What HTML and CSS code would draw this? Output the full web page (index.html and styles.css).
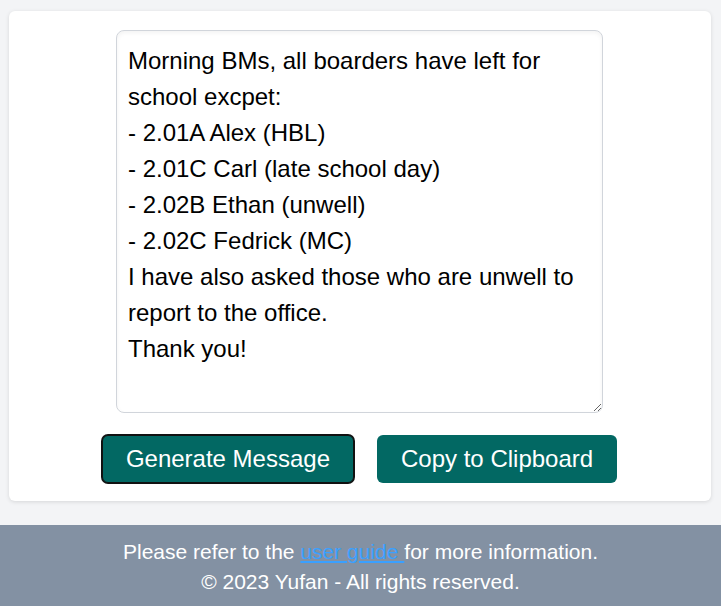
FILE: index.html
```html
<!DOCTYPE html>
<html lang="en">
<head>
<meta charset="utf-8">
<title>Boarders Message</title>
<link rel="stylesheet" href="styles.css">
</head>
<body>
<main class="page">
  <section class="card">
    <textarea class="message" spellcheck="false">Morning BMs, all boarders have left for school excpet:
- 2.01A Alex (HBL)
- 2.01C Carl (late school day)
- 2.02B Ethan (unwell)
- 2.02C Fedrick (MC)
I have also asked those who are unwell to report to the office.
Thank you!</textarea>
    <div class="actions">
      <button class="btn btn-focused" type="button">Generate Message</button>
      <button class="btn" type="button">Copy to Clipboard</button>
    </div>
  </section>
</main>
<footer class="footer">
  <p>Please refer to the <a href="#">user guide </a>for more information.</p>
  <p>© 2023 Yufan - All rights reserved.</p>
</footer>
</body>
</html>
```

FILE: styles.css
```css
html, body {
  margin: 0;
  padding: 0;
}
body {
  background: #f3f4f6;
  font-family: "Liberation Sans", Arial, sans-serif;
  color: #000;
}
.page {
  padding: 11px 10px 24px 9px;
}
.card {
  background: #ffffff;
  border-radius: 6px;
  box-shadow: 0 1px 4px rgba(0, 0, 0, 0.12);
  padding: 19px 0 18px;
  display: flex;
  flex-direction: column;
  align-items: center;
}
.message {
  box-sizing: border-box;
  width: 487px;
  height: 383px;
  margin-left: -1px;
  padding: 12px 11px;
  border: 1px solid #d1d5db;
  border-radius: 8px;
  box-shadow: inset 0 2px 4px rgba(0, 0, 0, 0.05);
  font-family: "Liberation Sans", Arial, sans-serif;
  font-size: 24px;
  line-height: 36px;
  color: #000;
  background: #fff;
  outline: none;
}
.actions {
  display: flex;
  gap: 23px;
  margin-top: 22px;
  margin-left: -1px;
}
.btn {
  font-family: "Liberation Sans", Arial, sans-serif;
  font-size: 24px;
  line-height: 36px;
  color: #ffffff;
  background: #026863;
  border: 1px solid transparent;
  border-radius: 6px;
  padding: 5px 23px;
  cursor: pointer;
}
.btn-focused {
  border-color: #111;
  box-shadow: 0 0 0 1px #111;
}
.footer {
  background: #8391a3;
  color: #ffffff;
  text-align: center;
  font-size: 21px;
  line-height: 30px;
  padding: 12px 0 12px;
}
.footer p {
  margin: 0;
}
.footer a {
  color: #3aa0ff;
  text-decoration: underline;
}
```
